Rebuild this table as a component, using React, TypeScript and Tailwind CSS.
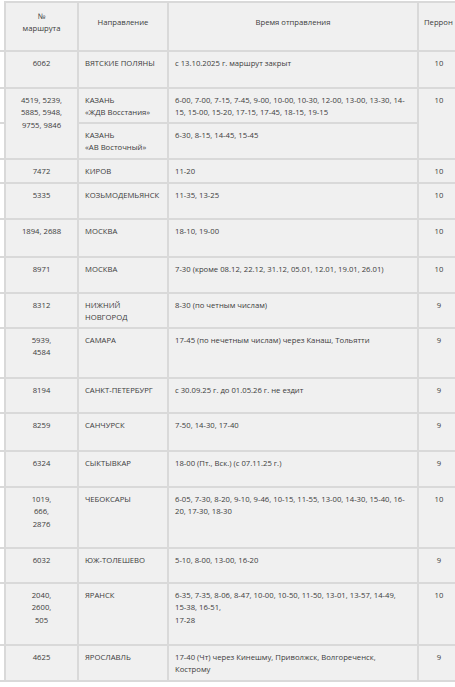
import React from "react";

type R = {
  num: React.ReactNode;
  dir: React.ReactNode;
  time: React.ReactNode;
  per: string;
  h: string;
};

const td = "border-2 border-[#d9d9d9] bg-[#f0f0f0] align-top px-[6px] pt-[5px] pb-0 whitespace-nowrap";
const side = "border-y-2 border-[#d9d9d9] bg-white p-0";

const rows: R[] = [
  { num: "7472", dir: "КИРОВ", time: "11-20", per: "10", h: "h-[24px]" },
  { num: "5335", dir: "КОЗЬМОДЕМЬЯНСК", time: "11-35, 13-25", per: "10", h: "h-[36px]" },
  { num: "1894, 2688", dir: "МОСКВА", time: "18-10, 19-00", per: "10", h: "h-[38px]" },
  {
    num: "8971",
    dir: "МОСКВА",
    time: "7-30 (кроме 08.12, 22.12, 31.12, 05.01, 12.01, 19.01, 26.01)",
    per: "10",
    h: "h-[36px]",
  },
  {
    num: "8312",
    dir: (
      <>
        НИЖНИЙ
        <br />
        НОВГОРОД
      </>
    ),
    time: "8-30 (по четным числам)",
    per: "9",
    h: "h-[35px]",
  },
  {
    num: (
      <>
        5939,
        <br />
        4584
      </>
    ),
    dir: "САМАРА",
    time: "17-45 (по нечетным числам) через Канаш, Тольятти",
    per: "9",
    h: "h-[50px]",
  },
  {
    num: "8194",
    dir: "САНКТ-ПЕТЕРБУРГ",
    time: "с 30.09.25 г. до 01.05.26 г. не ездит",
    per: "9",
    h: "h-[35px]",
  },
  { num: "8259", dir: "САНЧУРСК", time: "7-50, 14-30, 17-40", per: "9", h: "h-[38px]" },
  { num: "6324", dir: "СЫКТЫВКАР", time: "18-00 (Пт., Вск.) (с 07.11.25 г.)", per: "9", h: "h-[36px]" },
  {
    num: (
      <>
        1019,
        <br />
        666,
        <br />
        2876
      </>
    ),
    dir: "ЧЕБОКСАРЫ",
    time: (
      <>
        6-05, 7-30, 8-20, 9-10, 9-46, 10-15, 11-55, 13-00, 14-30, 15-40, 16-
        <br />
        20, 17-30, 18-30
      </>
    ),
    per: "10",
    h: "h-[61px]",
  },
  { num: "6032", dir: "ЮЖ-ТОЛЕШЕВО", time: "5-10, 8-00, 13-00, 16-20", per: "9", h: "h-[35px]" },
  {
    num: (
      <>
        2040,
        <br />
        2600,
        <br />
        505
      </>
    ),
    dir: "ЯРАНСК",
    time: (
      <>
        6-35, 7-35, 8-06, 8-47, 10-00, 10-50, 11-50, 13-01, 13-57, 14-49,
        <br />
        15-38, 16-51,
        <br />
        17-28
      </>
    ),
    per: "10",
    h: "h-[62px]",
  },
  {
    num: "4625",
    dir: "ЯРОСЛАВЛЬ",
    time: (
      <>
        17-40 (Чт) через Кинешму, Приволжск, Волгореченск,
        <br />
        Кострому
      </>
    ),
    per: "9",
    h: "h-[36px]",
  },
];

export default function App() {
  return (
    <div
      className="w-[455px] h-[687px] overflow-hidden bg-white pt-[1px] text-[#3c3c3c] text-[7.7px] leading-[12.3px]"
      style={{ fontFamily: '"Open Sans", "Noto Sans", sans-serif' }}
    >
      <table className="border-collapse table-fixed w-[460px]">
        <colgroup>
          <col className="w-[5px]" />
          <col className="w-[73px]" />
          <col className="w-[90px]" />
          <col className="w-[250px]" />
          <col className="w-[42px]" />
        </colgroup>
        <thead>
          <tr className="h-[49px]">
            <th className="border-b-2 border-[#d9d9d9] bg-white p-0" />
            <th className={`${td} font-normal text-center pt-[7px]`}>
              №
              <br />
              маршрута
            </th>
            <th className={`${td} font-normal text-center pt-[13px]`}>Направление</th>
            <th className={`${td} font-normal text-center pt-[13px]`}>Время отправления</th>
            <th className={`${td} font-normal text-left pt-[13px] pl-[5px]`}>Перрон</th>
          </tr>
        </thead>
        <tbody>
          <tr className="h-[37px]">
            <td className={side} />
            <td className={`${td} text-center`}>6062</td>
            <td className={td}>ВЯТСКИЕ ПОЛЯНЫ</td>
            <td className={td}>с 13.10.2025 г. маршрут закрыт</td>
            <td className={`${td} text-center`}>10</td>
          </tr>
          <tr className="h-[35px]">
            <td className={side} />
            <td className={`${td} text-center`} rowSpan={2}>
              4519, 5239,
              <br />
              5885, 5948,
              <br />
              9755, 9846
            </td>
            <td className={td}>
              КАЗАНЬ
              <br />
              «ЖДВ Восстания»
            </td>
            <td className={td}>
              6-00, 7-00, 7-15, 7-45, 9-00, 10-00, 10-30, 12-00, 13-00, 13-30, 14-
              <br />
              15, 15-00, 15-20, 17-15, 17-45, 18-15, 19-15
            </td>
            <td className={`${td} text-center`} rowSpan={2}>
              10
            </td>
          </tr>
          <tr className="h-[36px]">
            <td className={side} />
            <td className={td}>
              КАЗАНЬ
              <br />
              «АВ Восточный»
            </td>
            <td className={td}>6-30, 8-15, 14-45, 15-45</td>
          </tr>
          {rows.map((r, i) => (
            <tr key={i} className={r.h}>
              <td className={side} />
              <td className={`${td} text-center`}>{r.num}</td>
              <td className={td}>{r.dir}</td>
              <td className={td}>{r.time}</td>
              <td className={`${td} text-center`}>{r.per}</td>
            </tr>
          ))}
        </tbody>
      </table>
    </div>
  );
}
